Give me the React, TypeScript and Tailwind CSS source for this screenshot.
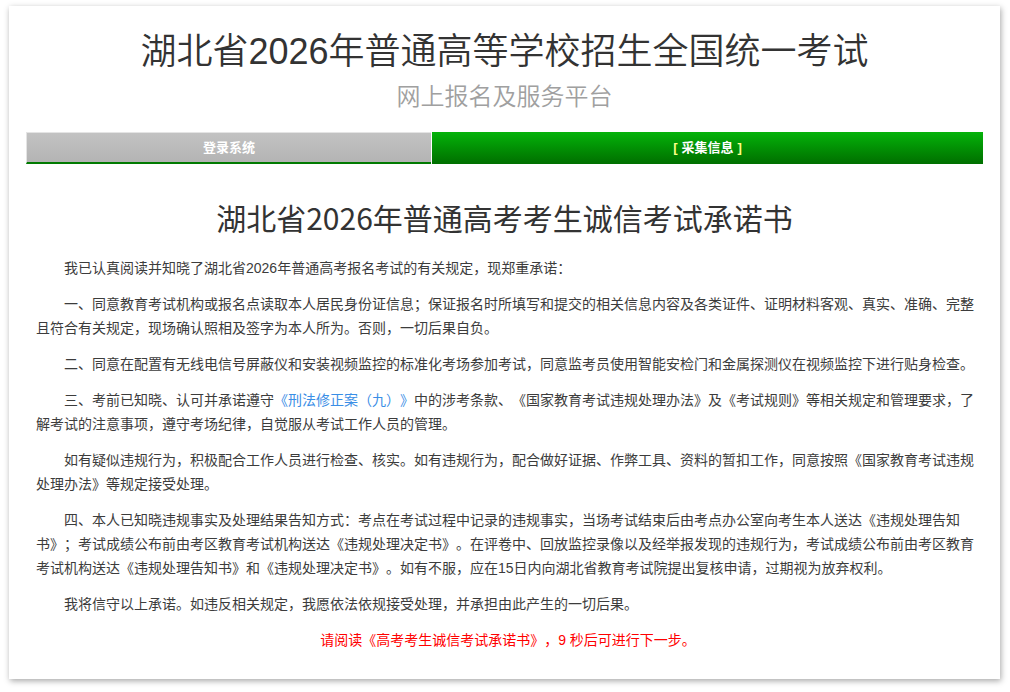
const body = "font-['Liberation_Sans','Noto_Sans_CJK_SC',sans-serif]";

const paragraphs: React.ReactNode[] = [
  "我已认真阅读并知晓了湖北省2026年普通高考报名考试的有关规定，现郑重承诺：",
  "一、同意教育考试机构或报名点读取本人居民身份证信息；保证报名时所填写和提交的相关信息内容及各类证件、证明材料客观、真实、准确、完整且符合有关规定，现场确认照相及签字为本人所为。否则，一切后果自负。",
  "二、同意在配置有无线电信号屏蔽仪和安装视频监控的标准化考场参加考试，同意监考员使用智能安检门和金属探测仪在视频监控下进行贴身检查。",
  <>
    三、考前已知晓、认可并承诺遵守<span className="text-[#3a8ee6]">《刑法修正案（九）》</span>中的涉考条款、《国家教育考试违规处理办法》及《考试规则》等相关规定和管理要求，了解考试的注意事项，遵守考场纪律，自觉服从考试工作人员的管理。
  </>,
  "如有疑似违规行为，积极配合工作人员进行检查、核实。如有违规行为，配合做好证据、作弊工具、资料的暂扣工作，同意按照《国家教育考试违规处理办法》等规定接受处理。",
  "四、本人已知晓违规事实及处理结果告知方式：考点在考试过程中记录的违规事实，当场考试结束后由考点办公室向考生本人送达《违规处理告知书》；考试成绩公布前由考区教育考试机构送达《违规处理决定书》。在评卷中、回放监控录像以及经举报发现的违规行为，考试成绩公布前由考区教育考试机构送达《违规处理告知书》和《违规处理决定书》。如有不服，应在15日内向湖北省教育考试院提出复核申请，过期视为放弃权利。",
  "我将信守以上承诺。如违反相关规定，我愿依法依规接受处理，并承担由此产生的一切后果。",
];

export default function App() {
  return (
    <div className="min-h-screen bg-white pt-[6px] pl-[9px] [text-spacing-trim:space-all]">
      <div className="w-[991px] h-[673px] bg-white shadow-[1px_2px_6px_rgba(0,0,0,0.35)]">
        <div className="pt-[19px] text-center">
          <h1 className="text-[36px] leading-[54px] font-[350] text-[#333] font-['Liberation_Sans','Noto_Sans_CJK_SC',sans-serif]">
            湖北省2026年普通高等学校招生全国统一考试
          </h1>
          <div className="text-[24px] leading-[36px] font-[350] text-[#a0a0a0] font-['Liberation_Sans','Noto_Sans_CJK_SC',sans-serif]">
            网上报名及服务平台
          </div>
        </div>

        <div className="mx-[17px] mt-[17px] flex h-[32px] text-[13px] font-bold text-white font-['Liberation_Sans','Noto_Sans_CJK_SC',sans-serif]">
          <div className="w-[405px] flex items-center justify-center border-t border-l border-[#e4e4e4] border-b-2 border-b-[#007a00] bg-gradient-to-b from-[#c2c2c2] to-[#b4b4b4]">
            登录系统
          </div>
          <div className="flex-1 flex items-center justify-center border-l border-white bg-gradient-to-b from-[#05b30b] to-[#006f00]">
            <span className="text-[#ffff88]">[</span>
            <span className="mx-[4px]">采集信息</span>
            <span className="text-[#ffff88]">]</span>
          </div>
        </div>

        <h2 className="mt-[31px] text-center text-[30px] leading-[45px] text-[#333] font-['Noto_Sans_CJK_SC',sans-serif]">
          湖北省2026年普通高考考生诚信考试承诺书
        </h2>

        <div className={`mt-[16px] pl-[27px] pr-[20px] text-[14px] leading-[24px] text-[#3c3c3c] ${body}`}>
          {paragraphs.map((p, i) => (
            <p key={i} className="mb-[12px] indent-[28px]">
              {p}
            </p>
          ))}
          <p className="text-center text-[#ff0000]">请阅读《高考考生诚信考试承诺书》，9 秒后可进行下一步。</p>
        </div>
      </div>
    </div>
  );
}
